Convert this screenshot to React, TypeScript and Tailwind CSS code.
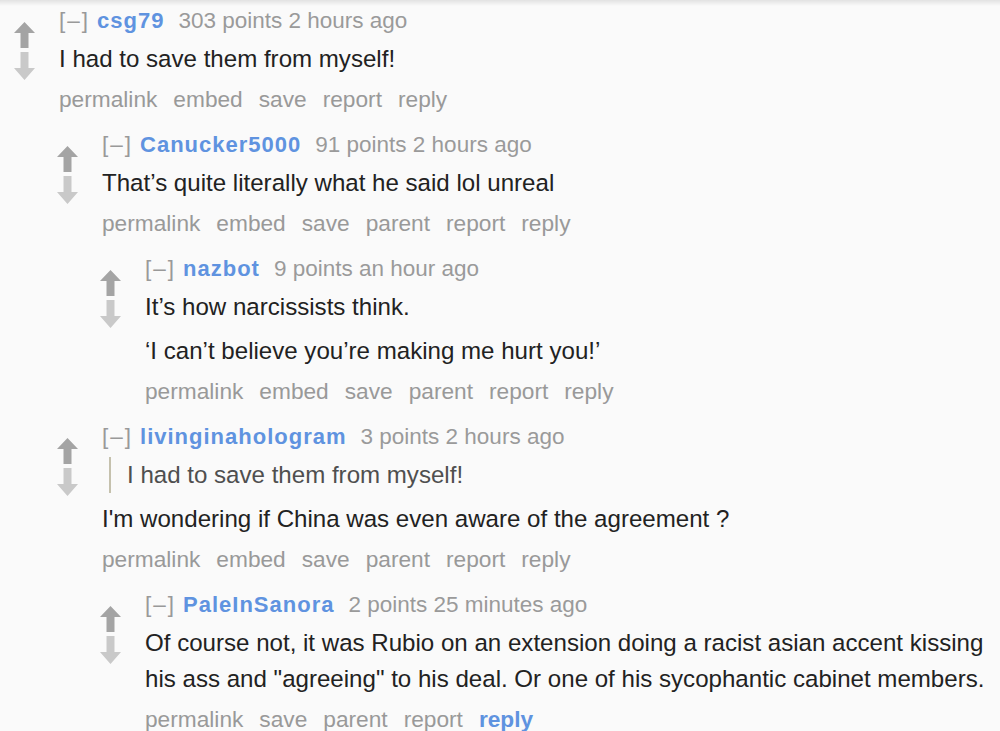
import React from 'react';

type CommentData = {
  author: string;
  score: string;
  age: string;
  quote?: string;
  body: string[];
  buttons: string[];
  replyActive?: boolean;
  children?: CommentData[];
};

const thread: CommentData = {
  author: 'csg79',
  score: '303 points',
  age: '2 hours ago',
  body: ['I had to save them from myself!'],
  buttons: ['permalink', 'embed', 'save', 'report', 'reply'],
  children: [
    {
      author: 'Canucker5000',
      score: '91 points',
      age: '2 hours ago',
      body: ['That\u2019s quite literally what he said lol unreal'],
      buttons: ['permalink', 'embed', 'save', 'parent', 'report', 'reply'],
      children: [
        {
          author: 'nazbot',
          score: '9 points',
          age: 'an hour ago',
          body: ['It\u2019s how narcissists think.', '\u2018I can\u2019t believe you\u2019re making me hurt you!\u2019'],
          buttons: ['permalink', 'embed', 'save', 'parent', 'report', 'reply'],
        },
      ],
    },
    {
      author: 'livinginahologram',
      score: '3 points',
      age: '2 hours ago',
      quote: 'I had to save them from myself!',
      body: ['I\'m wondering if China was even aware of the agreement ?'],
      buttons: ['permalink', 'embed', 'save', 'parent', 'report', 'reply'],
      children: [
        {
          author: 'PaleInSanora',
          score: '2 points',
          age: '25 minutes ago',
          body: [
            'Of course not, it was Rubio on an extension doing a racist asian accent kissing his ass and "agreeing" to his deal. Or one of his sycophantic cabinet members.',
          ],
          buttons: ['permalink', 'save', 'parent', 'report', 'reply'],
          replyActive: true,
        },
      ],
    },
  ],
};

const Arrows = () => (
  <div className="flex flex-col items-center w-[21px] mt-[14px] shrink-0">
    <svg width="21" height="26" viewBox="0 0 21 26">
      <path d="M10.5 0 L21 11 L14.5 11 L14.5 26 L6.5 26 L6.5 11 L0 11 Z" fill="#a4a4a4" />
    </svg>
    <svg width="21" height="28" viewBox="0 0 21 28" className="mt-[4px]">
      <path d="M6.5 0 L14.5 0 L14.5 16 L21 16 L10.5 28 L0 16 L6.5 16 Z" fill="#c9c9c9" />
    </svg>
  </div>
);

const Comment = ({ c }: { c: CommentData }) => (
  <div>
    <div className="flex items-start">
      <Arrows />
      <div className="ml-[24px] flex-1 min-w-0">
        {/* tagline */}
        <div className="flex items-baseline text-[22.5px] leading-[26px] whitespace-nowrap">
          <span className="text-[#999] tracking-[2px]">[–]</span>
          <span className="ml-[7px] font-bold text-[#5f93e0] tracking-[1px] text-[22px]">{c.author}</span>
          <span className="ml-[14px] text-[#9a9a9a]">{c.score} {c.age}</span>
        </div>

        {/* body */}
        <div className="mt-[7px] flex flex-col gap-[8px] text-[24.1px] leading-[36px] text-[#222] pr-[10px]">
          {c.quote && (
            <p className="ml-[7px] border-l-2 border-[#c5c1ad] pl-[16px] text-[#4f4f4f]">{c.quote}</p>
          )}
          {c.body.map((p, i) => (
            <p key={i}>{p}</p>
          ))}
        </div>

        {/* buttons */}
        <div className="mt-[9px] flex gap-[16px] text-[22.7px] leading-[26px] text-[#999]">
          {c.buttons.map((b) => (
            <span
              key={b}
              className={b === 'reply' && c.replyActive ? 'font-bold text-[#5f93e0]' : ''}
            >
              {b}
            </span>
          ))}
        </div>
      </div>
    </div>

    {c.children?.map((ch) => (
      <div key={ch.author} className="ml-[43px] mt-[20px]">
        <Comment c={ch} />
      </div>
    ))}
  </div>
);

export default function App() {
  return (
    <div
      className="relative w-[1000px] h-[731px] overflow-hidden bg-[#fafafa]"
      style={{ fontFamily: '"Liberation Sans", Arial, sans-serif' }}
    >
      <div className="absolute inset-x-0 top-0 h-[6px] bg-gradient-to-b from-[#e2e2e2] to-transparent" />
      <div className="pt-[8px] pl-[14px]">
        <Comment c={thread} />
      </div>
    </div>
  );
}
